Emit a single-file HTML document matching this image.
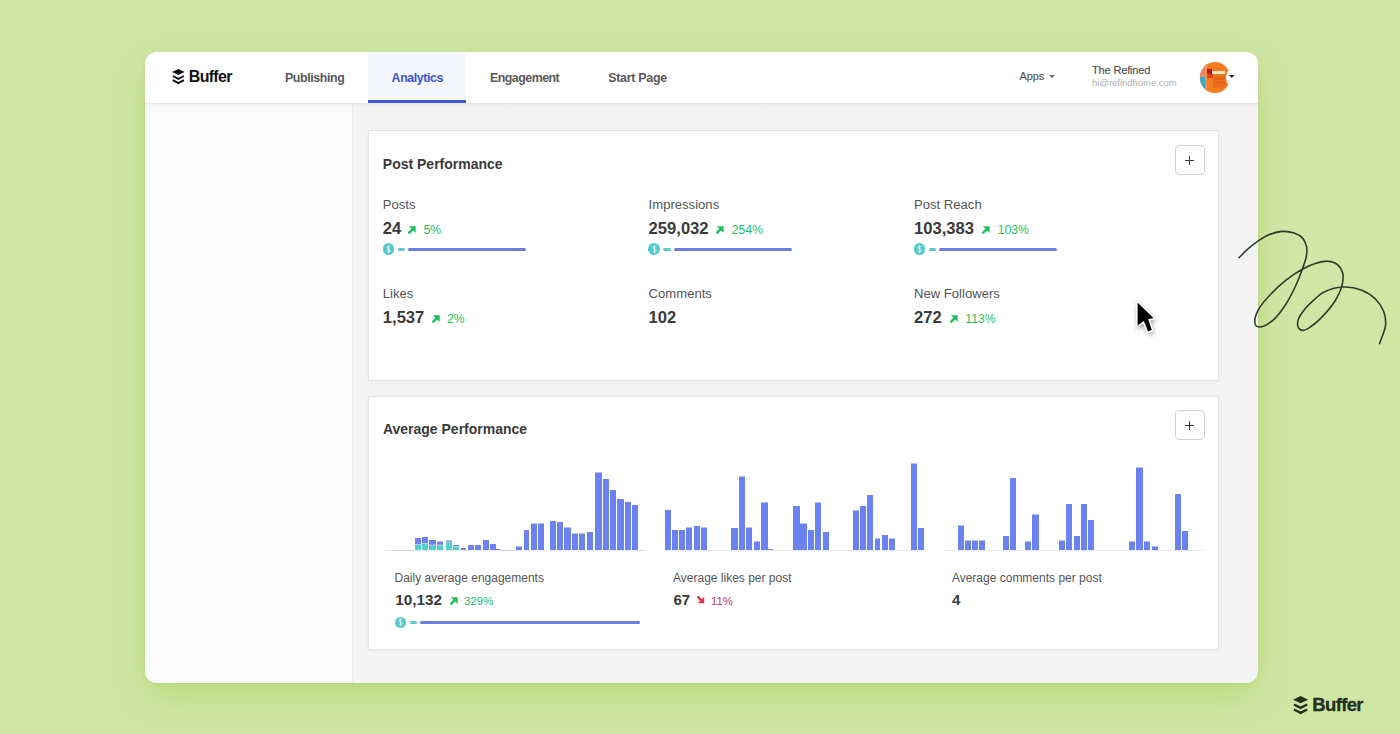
<!DOCTYPE html>
<html><head><meta charset="utf-8"><style>
html,body{margin:0;padding:0;}
body{width:1400px;height:734px;overflow:hidden;position:relative;background:#cfe6a5;font-family:"Liberation Sans", sans-serif;}
.t{position:absolute;line-height:1;white-space:nowrap;}
.r{position:absolute;}
svg{position:absolute;overflow:visible;}
</style></head><body>
<div class="r" style="left:145px;top:52px;width:1113px;height:631px;border-radius:12px;box-shadow:0 14px 34px -4px rgba(135,195,35,0.34), 0 1px 5px rgba(100,150,30,0.12);"></div>
<div class="r" style="left:145px;top:52px;width:1113px;height:631px;border-radius:12px;overflow:hidden;background:#f4f4f4;">
<div class="r" style="left:0px;top:51px;width:207px;height:580px;background:#fbfbfb;"></div>
<div class="r" style="left:207px;top:51px;width:1px;height:580px;background:#e9e9e9;"></div>
<div class="r" style="left:0px;top:0px;width:1113px;height:51px;background:#ffffff;"></div>
<div class="r" style="left:0px;top:51px;width:1113px;height:1px;background:#e6e6e6;"></div>
<div class="r" style="left:0px;top:52px;width:1113px;height:5px;background:linear-gradient(rgba(0,0,0,0.035),rgba(0,0,0,0));"></div>
<div class="r" style="left:223px;top:0px;width:98px;height:51px;background:#f5f6fb;"></div>
<div class="r" style="left:223px;top:48px;width:98px;height:3px;background:#3c5bd6;"></div>
<svg style="left:26.5px;top:16.599999999999994px" width="13" height="16" viewBox="0 0 13 16"><path d="M0,3.1 L6.35,0 L12.7,3.1 L6.35,6.1 Z" fill="#111"/><path d="M0.8,7.0 L6.35,9.9 L11.9,7.0" fill="none" stroke="#111" stroke-width="1.9" stroke-linejoin="miter"/><path d="M0.8,11.2 L6.35,14.1 L11.9,11.2" fill="none" stroke="#111" stroke-width="1.9"/></svg>
<div class="t" style="left:43.8px;top:16.76px;font-size:16px;color:#111;font-weight:700;letter-spacing:-0.7px;">Buffer</div>
<div class="t" style="left:140.0px;top:19.90px;font-size:12.4px;color:#595959;font-weight:700;letter-spacing:-0.4px;">Publishing</div>
<div class="t" style="left:246.6px;top:19.90px;font-size:12.4px;color:#3a55cf;font-weight:700;letter-spacing:-0.4px;">Analytics</div>
<div class="t" style="left:344.9px;top:19.90px;font-size:12.4px;color:#595959;font-weight:700;letter-spacing:-0.5px;">Engagement</div>
<div class="t" style="left:463.2px;top:19.90px;font-size:12.4px;color:#595959;font-weight:700;letter-spacing:-0.25px;">Start Page</div>
<div class="t" style="left:874.4px;top:18.99px;font-size:11px;color:#555;letter-spacing:-0.05px;-webkit-text-stroke:0.15px #555;">Apps</div>
<svg style="left:903.5999999999999px;top:23.200000000000003px" width="6" height="3" viewBox="0 0 6 3"><path d="M0,0 L6,0 L3,3 Z" fill="#666"/></svg>
<div class="t" style="left:947.0px;top:12.99px;font-size:11px;color:#505050;letter-spacing:-0.15px;-webkit-text-stroke:0.15px #505050;">The Refined</div>
<div class="t" style="left:947.0px;top:26.30px;font-size:9.45px;color:#b0b0b0;">hi@refindhome.com</div>
<div class="r" style="left:1055px;top:9.5px;width:30px;height:31px;border-radius:50%;overflow:hidden;background:#f47c20;">
<div class="r" style="left:0;top:4px;width:5px;height:12px;background:#e58a6a;"></div>
<div class="r" style="left:0;top:15px;width:5px;height:12px;background:#39a8cf;"></div>
<div class="r" style="left:5px;top:0;width:2px;height:31px;background:#f0923e;"></div>
<div class="r" style="left:7px;top:7px;width:5px;height:5px;background:#c8110b;"></div>
<div class="r" style="left:7px;top:12px;width:6px;height:4px;background:#e0451a;"></div>
<div class="r" style="left:12px;top:9px;width:13px;height:3px;background:#fde3c0;"></div>
<div class="r" style="left:13px;top:13px;width:12px;height:13px;background:#ea6d1e;"></div>
<div class="r" style="left:14px;top:16px;width:11px;height:1px;background:#d85a1a;"></div>
<div class="r" style="left:14px;top:20px;width:11px;height:1px;background:#d85a1a;"></div>
<div class="r" style="left:25.5px;top:5px;width:19px;height:21px;border-radius:50%;background:#fff;"></div>
</div>
<svg style="left:1084.4px;top:23.400000000000006px" width="5.5" height="3" viewBox="0 0 5.5 3"><path d="M0,0 L5.5,0 L2.75,3 Z" fill="#222"/></svg>
<div class="r" style="left:223px;top:78px;width:851px;height:251px;background:#fff;box-sizing:border-box;border:1px solid #e4e4e4;box-shadow:0 1px 4px rgba(0,0,0,0.035);"></div>
<div class="r" style="left:223px;top:344px;width:851px;height:254px;background:#fff;box-sizing:border-box;border:1px solid #e4e4e4;box-shadow:0 1px 4px rgba(0,0,0,0.035);"></div>
<div class="t" style="left:237.8px;top:104.65px;font-size:14px;color:#3a3a3a;font-weight:700;">Post Performance</div>
<div class="r" style="left:1030px;top:93px;width:30px;height:30px;background:#fff;box-sizing:border-box;border:1px solid #d2d2d2;border-radius:4px;"></div>
<div class="r" style="left:1040.3px;top:107.7px;width:9px;height:1.2px;background:#3a3a3a"></div>
<div class="r" style="left:1044.2px;top:103.8px;width:1.2px;height:9px;background:#3a3a3a"></div>
<div class="t" style="left:237.8px;top:145.91px;font-size:13.1px;color:#555;">Posts</div>
<div class="t" style="left:237.8px;top:168.55px;font-size:16.6px;color:#3a3a3a;font-weight:700;">24</div>
<svg style="left:263.2px;top:174.0px" width="8" height="8" viewBox="0 0 8 8"><path d="M1.3,6.7 L4.6,3.4" stroke="#1fc063" stroke-width="2.6" stroke-linecap="round" fill="none"/><path d="M0.9,0.2 L7.7,0.2 L7.7,7.0 Z" fill="#1fc063"/></svg>
<div class="t" style="left:278.6px;top:171.97px;font-size:12.2px;color:#1fc063;">5%</div>
<div class="r" style="left:237.5px;top:191.4px;width:11.6px;height:11.6px;border-radius:50%;background:#55cacd;"></div>
<svg style="left:240.8px;top:193.0px" width="5" height="8.4" viewBox="0 0 5 8.4"><path d="M4,2.2 C3.6,1.2 1,1.1 1,2.6 C1,4.2 4.1,3.6 4.1,5.6 C4.1,7.2 1.3,7.3 0.9,6.1 M2.5,0.3 V8.1" fill="none" stroke="rgba(255,255,255,0.85)" stroke-width="0.9"/></svg>
<div class="r" style="left:252.60000000000002px;top:195.7px;width:7.599999999999966px;height:3.0px;background:#5ccacb;border-radius:1.5px;"></div>
<div class="r" style="left:262.8px;top:195.6px;width:118.40000000000003px;height:3.1999999999999886px;background:#6a7fda;border-radius:1.6px;"></div>
<div class="t" style="left:503.6px;top:145.91px;font-size:13.1px;color:#555;">Impressions</div>
<div class="t" style="left:503.6px;top:168.55px;font-size:16.6px;color:#3a3a3a;font-weight:700;">259,032</div>
<svg style="left:571.4px;top:174.0px" width="8" height="8" viewBox="0 0 8 8"><path d="M1.3,6.7 L4.6,3.4" stroke="#1fc063" stroke-width="2.6" stroke-linecap="round" fill="none"/><path d="M0.9,0.2 L7.7,0.2 L7.7,7.0 Z" fill="#1fc063"/></svg>
<div class="t" style="left:586.8px;top:171.97px;font-size:12.2px;color:#1fc063;">254%</div>
<div class="r" style="left:503.3px;top:191.4px;width:11.6px;height:11.6px;border-radius:50%;background:#55cacd;"></div>
<svg style="left:506.6px;top:193.0px" width="5" height="8.4" viewBox="0 0 5 8.4"><path d="M4,2.2 C3.6,1.2 1,1.1 1,2.6 C1,4.2 4.1,3.6 4.1,5.6 C4.1,7.2 1.3,7.3 0.9,6.1 M2.5,0.3 V8.1" fill="none" stroke="rgba(255,255,255,0.85)" stroke-width="0.9"/></svg>
<div class="r" style="left:518.4px;top:195.7px;width:7.600000000000023px;height:3.0px;background:#5ccacb;border-radius:1.5px;"></div>
<div class="r" style="left:528.6px;top:195.6px;width:118.39999999999998px;height:3.1999999999999886px;background:#6a7fda;border-radius:1.6px;"></div>
<div class="t" style="left:769.0px;top:145.91px;font-size:13.1px;color:#555;">Post Reach</div>
<div class="t" style="left:769.0px;top:168.55px;font-size:16.6px;color:#3a3a3a;font-weight:700;">103,383</div>
<svg style="left:837.3px;top:174.0px" width="8" height="8" viewBox="0 0 8 8"><path d="M1.3,6.7 L4.6,3.4" stroke="#1fc063" stroke-width="2.6" stroke-linecap="round" fill="none"/><path d="M0.9,0.2 L7.7,0.2 L7.7,7.0 Z" fill="#1fc063"/></svg>
<div class="t" style="left:852.7px;top:171.97px;font-size:12.2px;color:#1fc063;">103%</div>
<div class="r" style="left:768.7px;top:191.4px;width:11.6px;height:11.6px;border-radius:50%;background:#55cacd;"></div>
<svg style="left:772.0px;top:193.0px" width="5" height="8.4" viewBox="0 0 5 8.4"><path d="M4,2.2 C3.6,1.2 1,1.1 1,2.6 C1,4.2 4.1,3.6 4.1,5.6 C4.1,7.2 1.3,7.3 0.9,6.1 M2.5,0.3 V8.1" fill="none" stroke="rgba(255,255,255,0.85)" stroke-width="0.9"/></svg>
<div class="r" style="left:783.8px;top:195.7px;width:7.600000000000023px;height:3.0px;background:#5ccacb;border-radius:1.5px;"></div>
<div class="r" style="left:794.0px;top:195.6px;width:118.40000000000009px;height:3.1999999999999886px;background:#6a7fda;border-radius:1.6px;"></div>
<div class="t" style="left:237.8px;top:235.11px;font-size:13.1px;color:#555;">Likes</div>
<div class="t" style="left:237.8px;top:257.55px;font-size:16.6px;color:#3a3a3a;font-weight:700;">1,537</div>
<svg style="left:286.6px;top:263.0px" width="8" height="8" viewBox="0 0 8 8"><path d="M1.3,6.7 L4.6,3.4" stroke="#1fc063" stroke-width="2.6" stroke-linecap="round" fill="none"/><path d="M0.9,0.2 L7.7,0.2 L7.7,7.0 Z" fill="#1fc063"/></svg>
<div class="t" style="left:302.0px;top:260.97px;font-size:12.2px;color:#1fc063;">2%</div>
<div class="t" style="left:503.6px;top:235.11px;font-size:13.1px;color:#555;">Comments</div>
<div class="t" style="left:503.6px;top:257.55px;font-size:16.6px;color:#3a3a3a;font-weight:700;">102</div>
<div class="t" style="left:769.0px;top:235.11px;font-size:13.1px;color:#555;">New Followers</div>
<div class="t" style="left:769.0px;top:257.55px;font-size:16.6px;color:#3a3a3a;font-weight:700;">272</div>
<svg style="left:804.9px;top:263.0px" width="8" height="8" viewBox="0 0 8 8"><path d="M1.3,6.7 L4.6,3.4" stroke="#1fc063" stroke-width="2.6" stroke-linecap="round" fill="none"/><path d="M0.9,0.2 L7.7,0.2 L7.7,7.0 Z" fill="#1fc063"/></svg>
<div class="t" style="left:820.3px;top:260.97px;font-size:12.2px;color:#1fc063;">113%</div>
<div class="t" style="left:237.9px;top:369.85px;font-size:14px;color:#3a3a3a;font-weight:700;">Average Performance</div>
<div class="r" style="left:1030px;top:358px;width:30px;height:30px;background:#fff;box-sizing:border-box;border:1px solid #d2d2d2;border-radius:4px;"></div>
<div class="r" style="left:1040.3px;top:372.7px;width:9px;height:1.2px;background:#3a3a3a"></div>
<div class="r" style="left:1044.2px;top:368.8px;width:1.2px;height:9px;background:#3a3a3a"></div>
<div class="r" style="left:239px;top:497.5px;width:262px;height:1.0px;background:#ececec;"></div>
<div class="r" style="left:519px;top:497.5px;width:260px;height:1.0px;background:#e9e9e9;"></div>
<div class="r" style="left:798px;top:497.5px;width:261px;height:1.0px;background:#e9e9e9;"></div>
<div class="r" style="left:247px;top:497.5px;width:22px;height:1.0px;background:#d2d2d6;"></div>
<div class="r" style="left:355px;top:497.5px;width:14.5px;height:1.0px;background:#d2d4d9;"></div>
<div class="r" style="left:494px;top:497.5px;width:7px;height:1.0px;background:#dcdcdc;"></div>
<div class="r" style="left:351px;top:496.79999999999995px;width:4px;height:1.2000000000000455px;background:#6b78c8;"></div>
<div class="r" style="left:623px;top:496.79999999999995px;width:5px;height:1.2000000000000455px;background:#8a8fb8;"></div>
<svg style="left:0;top:0" width="1113" height="631"><rect x="270" y="486.0" width="6" height="12.0" fill="#6c82f0"/><rect x="270" y="493.0" width="6" height="5.0" fill="#4fd2cf"/><rect x="270" y="492.2" width="6" height="0.8" fill="#fff" opacity="0.7"/><rect x="277" y="485.0" width="6" height="13.0" fill="#6c82f0"/><rect x="277" y="492.0" width="6" height="6.0" fill="#4fd2cf"/><rect x="277" y="491.2" width="6" height="0.8" fill="#fff" opacity="0.7"/><rect x="284" y="488.0" width="7" height="10.0" fill="#6c82f0"/><rect x="284" y="493.5" width="7" height="4.5" fill="#4fd2cf"/><rect x="284" y="492.7" width="7" height="0.8" fill="#fff" opacity="0.7"/><rect x="292" y="489.5" width="6" height="8.5" fill="#6c82f0"/><rect x="292" y="493.5" width="6" height="4.5" fill="#4fd2cf"/><rect x="292" y="492.7" width="6" height="0.8" fill="#fff" opacity="0.7"/><rect x="301" y="488.5" width="6" height="9.5" fill="#6c82f0"/><rect x="301" y="490.5" width="6" height="7.5" fill="#4fd2cf"/><rect x="301" y="489.7" width="6" height="0.8" fill="#fff" opacity="0.7"/><rect x="308" y="493.0" width="6" height="5.0" fill="#6c82f0"/><rect x="308" y="495.0" width="6" height="3.0" fill="#4fd2cf"/><rect x="308" y="494.2" width="6" height="0.8" fill="#fff" opacity="0.7"/><rect x="316" y="496.0" width="5" height="2.0" fill="#6c82f0"/><rect x="323" y="493.0" width="6" height="5.0" fill="#6c82f0"/><rect x="330" y="493.0" width="6" height="5.0" fill="#6c82f0"/><rect x="338" y="488.0" width="6" height="10.0" fill="#6c82f0"/><rect x="345" y="492.0" width="6" height="6.0" fill="#6c82f0"/><rect x="371" y="494.5" width="6" height="3.5" fill="#6c82f0"/><rect x="379" y="478.0" width="5" height="20.0" fill="#6c82f0"/><rect x="386" y="471.5" width="6" height="26.5" fill="#6c82f0"/><rect x="393" y="471.5" width="6" height="26.5" fill="#6c82f0"/><rect x="405" y="469.0" width="6" height="29.0" fill="#6c82f0"/><rect x="412" y="470.0" width="6" height="28.0" fill="#6c82f0"/><rect x="419" y="475.5" width="7" height="22.5" fill="#6c82f0"/><rect x="427" y="481.5" width="6" height="16.5" fill="#6c82f0"/><rect x="434" y="481.5" width="6" height="16.5" fill="#6c82f0"/><rect x="442" y="480.0" width="6" height="18.0" fill="#6c82f0"/><rect x="450" y="420.5" width="7" height="77.5" fill="#6c82f0"/><rect x="458" y="427.0" width="6" height="71.0" fill="#6c82f0"/><rect x="465" y="438.0" width="6" height="60.0" fill="#6c82f0"/><rect x="472" y="447.0" width="7" height="51.0" fill="#6c82f0"/><rect x="480" y="450.0" width="6" height="48.0" fill="#6c82f0"/><rect x="487" y="453.0" width="6" height="45.0" fill="#6c82f0"/><rect x="520" y="458.0" width="6" height="40.0" fill="#6c82f0"/><rect x="527" y="478.0" width="6" height="20.0" fill="#6c82f0"/><rect x="534" y="478.0" width="6" height="20.0" fill="#6c82f0"/><rect x="541" y="475.5" width="6" height="22.5" fill="#6c82f0"/><rect x="549" y="474.0" width="6" height="24.0" fill="#6c82f0"/><rect x="556" y="475.5" width="6" height="22.5" fill="#6c82f0"/><rect x="586" y="476.0" width="7" height="22.0" fill="#6c82f0"/><rect x="594" y="424.5" width="6" height="73.5" fill="#6c82f0"/><rect x="601" y="475.5" width="6" height="22.5" fill="#6c82f0"/><rect x="609" y="489.5" width="6" height="8.5" fill="#6c82f0"/><rect x="616" y="450.5" width="7" height="47.5" fill="#6c82f0"/><rect x="648" y="454.0" width="7" height="44.0" fill="#6c82f0"/><rect x="655" y="471.5" width="7" height="26.5" fill="#6c82f0"/><rect x="663" y="478.0" width="6" height="20.0" fill="#6c82f0"/><rect x="670" y="450.5" width="6" height="47.5" fill="#6c82f0"/><rect x="678" y="480.0" width="6" height="18.0" fill="#6c82f0"/><rect x="708" y="458.5" width="6" height="39.5" fill="#6c82f0"/><rect x="715" y="454.0" width="6" height="44.0" fill="#6c82f0"/><rect x="722" y="443.0" width="6" height="55.0" fill="#6c82f0"/><rect x="730" y="486.5" width="5" height="11.5" fill="#6c82f0"/><rect x="737" y="483.0" width="6" height="15.0" fill="#6c82f0"/><rect x="744" y="486.5" width="6" height="11.5" fill="#6c82f0"/><rect x="766" y="411.5" width="6" height="86.5" fill="#6c82f0"/><rect x="773" y="476.0" width="6" height="22.0" fill="#6c82f0"/><rect x="813" y="473.5" width="6" height="24.5" fill="#6c82f0"/><rect x="820" y="488.5" width="6" height="9.5" fill="#6c82f0"/><rect x="827" y="488.5" width="6" height="9.5" fill="#6c82f0"/><rect x="834" y="488.5" width="6" height="9.5" fill="#6c82f0"/><rect x="858" y="484.0" width="6" height="14.0" fill="#6c82f0"/><rect x="865" y="426.0" width="6" height="72.0" fill="#6c82f0"/><rect x="880" y="489.5" width="6" height="8.5" fill="#6c82f0"/><rect x="887" y="462.5" width="7" height="35.5" fill="#6c82f0"/><rect x="914" y="488.5" width="6" height="9.5" fill="#6c82f0"/><rect x="921" y="452.0" width="6" height="46.0" fill="#6c82f0"/><rect x="929" y="484.0" width="6" height="14.0" fill="#6c82f0"/><rect x="936" y="452.0" width="6" height="46.0" fill="#6c82f0"/><rect x="943" y="468.0" width="6" height="30.0" fill="#6c82f0"/><rect x="984" y="489.5" width="6" height="8.5" fill="#6c82f0"/><rect x="991" y="415.5" width="7" height="82.5" fill="#6c82f0"/><rect x="999" y="489.5" width="6" height="8.5" fill="#6c82f0"/><rect x="1007" y="494.5" width="6" height="3.5" fill="#6c82f0"/><rect x="1030" y="442.0" width="6" height="56.0" fill="#6c82f0"/><rect x="1037" y="479.0" width="6" height="19.0" fill="#6c82f0"/></svg>
<div class="t" style="left:249.5px;top:519.94px;font-size:12px;color:#555;">Daily average engagements</div>
<div class="t" style="left:250.3px;top:540.15px;font-size:15.3px;color:#3a3a3a;font-weight:700;">10,132</div>
<svg style="left:305.2px;top:544.6px" width="8" height="8" viewBox="0 0 8 8"><path d="M1.3,6.7 L4.6,3.4" stroke="#1fc063" stroke-width="2.6" stroke-linecap="round" fill="none"/><path d="M0.9,0.2 L7.7,0.2 L7.7,7.0 Z" fill="#1fc063"/></svg>
<div class="t" style="left:319.2px;top:543.95px;font-size:11.4px;color:#1fc063;">329%</div>
<div class="r" style="left:249.5px;top:564.8px;width:11.6px;height:11.6px;border-radius:50%;background:#55cacd;"></div>
<svg style="left:252.8px;top:566.4px" width="5" height="8.4" viewBox="0 0 5 8.4"><path d="M4,2.2 C3.6,1.2 1,1.1 1,2.6 C1,4.2 4.1,3.6 4.1,5.6 C4.1,7.2 1.3,7.3 0.9,6.1 M2.5,0.3 V8.1" fill="none" stroke="rgba(255,255,255,0.85)" stroke-width="0.9"/></svg>
<div class="r" style="left:264.6px;top:569.1px;width:7.599999999999966px;height:3.0px;background:#5ccacb;border-radius:1.5px;"></div>
<div class="r" style="left:274.8px;top:569.0px;width:219.90000000000003px;height:3.2000000000000455px;background:#6a7fda;border-radius:1.6px;"></div>
<div class="t" style="left:528.0px;top:519.94px;font-size:12px;color:#555;">Average likes per post</div>
<div class="t" style="left:528.5px;top:540.40px;font-size:15px;color:#3a3a3a;font-weight:700;">67</div>
<svg style="left:552.0px;top:544.3px" width="7.5" height="7.5" viewBox="0 0 7.5 7.5"><path d="M1.2,1.2 L4.3,4.3" stroke="#d93352" stroke-width="2.4" stroke-linecap="round" fill="none"/><path d="M0.8,7.2 L7.2,7.2 L7.2,0.8 Z" fill="#d93352"/></svg>
<div class="t" style="left:566.0px;top:543.53px;font-size:11.3px;color:#c23a55;">11%</div>
<div class="t" style="left:806.9px;top:519.94px;font-size:12px;color:#555;">Average comments per post</div>
<div class="t" style="left:806.9px;top:540.40px;font-size:15px;color:#3a3a3a;font-weight:700;">4</div>
</div>
<svg style="left:1293px;top:696px" width="15.5" height="18" viewBox="0 0 13 15"><path d="M0,3.1 L6.35,0 L12.7,3.1 L6.35,6.1 Z" fill="#25301f"/><path d="M0.8,7.0 L6.35,9.9 L11.9,7.0" fill="none" stroke="#25301f" stroke-width="1.9"/><path d="M0.8,11.2 L6.35,14.1 L11.9,11.2" fill="none" stroke="#25301f" stroke-width="1.9"/></svg>
<div class="t" style="left:1312.3px;top:696.14px;font-size:18.5px;color:#25301f;font-weight:700;letter-spacing:-0.65px;-webkit-text-stroke:0.35px #25301f;">Buffer</div>
<svg style="left:0;top:0" width="1400" height="734"><path d="M1239.05,257.60 C1241.93,254.77 1244.56,251.83 1247.70,249.10 C1251.04,246.19 1254.95,243.15 1258.60,240.70 C1261.98,238.43 1265.05,236.32 1268.80,234.80 C1272.88,233.14 1277.93,231.63 1282.30,231.40 C1286.34,231.19 1290.60,231.87 1294.10,233.10 C1297.29,234.22 1300.51,235.81 1302.60,238.10 C1304.64,240.34 1305.97,243.63 1306.60,246.60 C1307.23,249.56 1306.94,252.56 1306.40,255.90 C1305.74,259.98 1303.93,264.58 1302.30,269.20 C1300.47,274.39 1298.36,279.97 1295.80,285.50 C1293.00,291.55 1289.72,298.28 1286.00,304.00 C1282.42,309.51 1278.50,315.38 1274.00,319.30 C1270.03,322.76 1264.30,326.38 1260.90,326.90 C1258.94,327.20 1257.02,326.88 1256.00,325.80 C1254.83,324.57 1254.63,321.75 1254.90,319.30 C1255.28,315.86 1257.39,311.28 1259.80,307.30 C1262.69,302.54 1267.48,297.60 1271.80,293.10 C1276.20,288.52 1280.94,284.07 1286.00,280.10 C1291.10,276.09 1296.97,272.10 1302.30,269.20 C1306.95,266.67 1311.54,264.64 1316.00,263.30 C1319.98,262.10 1324.03,260.95 1327.70,261.20 C1331.06,261.43 1334.71,262.34 1337.20,264.30 C1339.74,266.30 1341.85,269.85 1342.70,273.20 C1343.62,276.82 1343.06,281.14 1342.00,285.40 C1340.72,290.58 1337.80,296.55 1334.50,301.80 C1330.91,307.49 1325.26,313.71 1320.90,318.10 C1317.49,321.54 1314.26,324.37 1311.00,326.50 C1308.30,328.26 1305.26,330.45 1303.00,330.40 C1301.30,330.36 1299.48,329.36 1298.60,328.00 C1297.51,326.32 1297.38,323.06 1298.00,320.40 C1298.80,316.97 1301.80,312.97 1304.50,309.50 C1307.48,305.67 1311.93,301.66 1315.40,298.60 C1318.25,296.08 1320.08,293.96 1323.60,292.20 C1328.46,289.77 1336.30,287.32 1342.70,287.00 C1349.03,286.68 1356.17,288.02 1361.80,290.20 C1366.95,292.20 1371.72,295.37 1375.40,299.00 C1378.91,302.47 1381.91,306.89 1383.60,311.30 C1385.23,315.55 1386.01,320.05 1385.60,324.90 C1385.11,330.71 1381.53,337.43 1379.50,343.70" fill="none" stroke="#2e3d29" stroke-width="1.6" stroke-linecap="round" stroke-linejoin="round"/></svg>
<svg style="left:0;top:0" width="1400" height="734"><defs><filter id="cs" x="-80%" y="-80%" width="260%" height="260%"><feGaussianBlur stdDeviation="2.6"/></filter></defs><path d="M1136.8,300.6 L1155.3,318.8 L1149.2,319.7 L1152.8,330.4 L1147.6,332.6 L1143.5,322.2 L1136.8,327.2 Z" fill="rgba(0,0,0,0.45)" filter="url(#cs)" transform="translate(0.8,2.2)"/><path d="M1136.8,300.6 L1155.3,318.8 L1149.2,319.7 L1152.8,330.4 L1147.6,332.6 L1143.5,322.2 L1136.8,327.2 Z" fill="#000" stroke="#fff" stroke-width="1.6" stroke-linejoin="miter"/></svg>
</body></html>
